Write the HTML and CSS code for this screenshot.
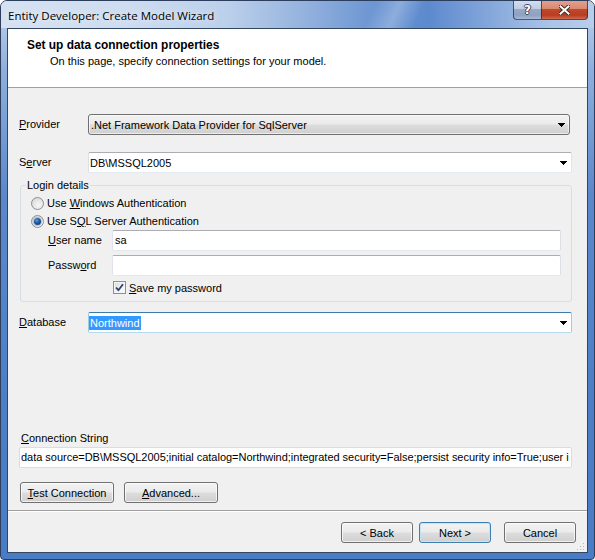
FILE: index.html
```html
<!DOCTYPE html>
<html>
<head>
<meta charset="utf-8">
<title>Entity Developer: Create Model Wizard</title>
<link rel="stylesheet" href="styles.css">
</head>
<body>
<div class="window">
  <div class="titlebar">
    <span class="title">Entity Developer: Create Model Wizard</span>
    <div class="caption-btns">
      <div class="cap cap-help"><span class="help-glyph">?</span></div>
      <div class="cap cap-close">
        <svg width="11" height="10" viewBox="0 0 11 10">
          <path d="M1.5 1.5L9.5 8.5M9.5 1.5L1.5 8.5" stroke="#3a2a2a" stroke-width="4" stroke-linecap="square" fill="none"/>
          <path d="M1.5 1.5L9.5 8.5M9.5 1.5L1.5 8.5" stroke="#ffffff" stroke-width="2" stroke-linecap="square" fill="none"/>
        </svg>
      </div>
    </div>
  </div>
  <div class="client">
    <div class="header">
      <div class="h-title">Set up data connection properties</div>
      <div class="h-sub">On this page, specify connection settings for your model.</div>
    </div>
    <div class="form">
      <div class="row">
        <span class="lbl"><u>P</u>rovider</span>
        <div class="combo combo-btn">
          <span class="combo-text">.Net Framework Data Provider for SqlServer</span>
          <svg class="arrow" width="7" height="4" viewBox="0 0 7 4"><path d="M0 0h7v1h-1v1h-1v1h-1v1h-1v-1h-1v-1h-1v-1h-1z" fill="#000"/></svg>
        </div>
      </div>
      <div class="row row-server">
        <span class="lbl">S<u>e</u>rver</span>
        <div class="combo combo-edit">
          <span class="combo-text edit-text">DB\MSSQL2005</span>
          <svg class="arrow" width="7" height="4" viewBox="0 0 7 4"><path d="M0 0h7v1h-1v1h-1v1h-1v1h-1v-1h-1v-1h-1v-1h-1z" fill="#000"/></svg>
        </div>
      </div>
      <fieldset class="group">
        <legend>Login details</legend>
        <div class="group-body">
          <div class="opt-row"><span class="radio"></span><span>Use <u>W</u>indows Authentication</span></div>
          <div class="opt-row"><span class="radio checked"><span class="dot"></span></span><span>Use S<u>Q</u>L Server Authentication</span></div>
          <div class="field-row">
            <span class="lbl"><u>U</u>ser name</span>
            <div class="textbox">sa</div>
          </div>
          <div class="field-row field-pass">
            <span class="lbl">Passw<u>o</u>rd</span>
            <div class="textbox"></div>
          </div>
          <div class="check-row">
            <span class="checkbox">
              <svg width="9" height="9" viewBox="0 0 9 9"><path d="M1 4.5L3.4 7.2L8 1.2" stroke="#2a3f6e" stroke-width="1.8" fill="none"/></svg>
            </span>
            <span><u>S</u>ave my password</span>
          </div>
        </div>
      </fieldset>
      <div class="row row-db">
        <span class="lbl"><u>D</u>atabase</span>
        <div class="combo combo-edit combo-focus">
          <span class="combo-text sel-text">Northwind</span>
          <svg class="arrow" width="7" height="4" viewBox="0 0 7 4"><path d="M0 0h7v1h-1v1h-1v1h-1v1h-1v-1h-1v-1h-1v-1h-1z" fill="#000"/></svg>
        </div>
      </div>
      <div class="conn">
        <span class="conn-lbl"><u>C</u>onnection String</span>
        <div class="conn-box">data source=DB\MSSQL2005;initial catalog=Northwind;integrated security=False;persist security info=True;user i</div>
      </div>
      <div class="conn-actions">
        <button class="btn btn-wide"><u>T</u>est Connection</button>
        <button class="btn btn-wide"><u>A</u>dvanced...</button>
      </div>
    </div>
    <div class="footer">
      <button class="btn btn-nav">&lt; Back</button>
      <button class="btn btn-nav btn-default">Next &gt;</button>
      <button class="btn btn-nav btn-cancel">Cancel</button>
    </div>
    <svg class="grip" width="8" height="8" viewBox="0 0 8 8">
      <rect x="6" y="0" width="1" height="1" fill="#b8b8b8"/>
      <rect x="3" y="3" width="1" height="1" fill="#b8b8b8"/>
      <rect x="6" y="3" width="1" height="1" fill="#b8b8b8"/>
      <rect x="0" y="6" width="1" height="1" fill="#b8b8b8"/>
      <rect x="3" y="6" width="1" height="1" fill="#b8b8b8"/>
      <rect x="6" y="6" width="1" height="1" fill="#b8b8b8"/>
    </svg>
  </div>
</div>
</body>
</html>
```

FILE: styles.css
```css
* { box-sizing: border-box; }
html, body { margin: 0; padding: 0; background: #ffffff; }
body {
  width: 595px;
  height: 560px;
  overflow: hidden;
  font-family: "Liberation Sans", Arial, sans-serif;
  font-size: 11px;
  color: #000;
}
u { text-decoration: underline; text-underline-offset: 1px; }

.window {
  width: 595px;
  height: 560px;
  border: 1px solid #2c3e5c;
  border-radius: 7px 7px 4px 4px;
  overflow: hidden;
  display: flex;
  flex-direction: column;
  background: linear-gradient(to bottom, #c3d4ea 0%, #8fb0de 12%, #5a88ca 35%, #4e7fc5 70%, #4a7cc4 100%);
}

.titlebar {
  height: 27px;
  flex: none;
  display: flex;
  align-items: flex-start;
  margin: 0 -1px;
  background:
    linear-gradient(115deg, rgba(255,255,255,0) 62%, rgba(255,255,255,0.25) 66%, rgba(255,255,255,0) 70%),
    linear-gradient(to right, #d6e2f2 0%, #cddcf0 22%, #bcd0eb 38%, #98b5df 50%, #6e97d3 62%, #5d8ace 72%, #7fa3d9 81%, #a9c3e6 92%, #b8cfeb 100%);
}
.title {
  padding: 7px 0 0 8px;
  font-family: "Open Sans", "Noto Sans", sans-serif;
  font-size: 11.5px;
  line-height: 16px;
  color: #000;
  text-shadow: 0 0 6px rgba(255,255,255,0.9);
}
.caption-btns {
  margin-left: auto;
  margin-right: 7px;
  margin-top: -1px;
  display: flex;
}
.cap {
  height: 20px;
  display: flex;
  align-items: center;
  justify-content: center;
  border: 1px solid rgba(28,44,72,0.75);
  border-top: none;
}
.cap-help {
  width: 28px;
  border-radius: 0 0 0 4px;
  border-right: none;
  background: linear-gradient(to bottom, #d6e0ee 0%, #c0cde2 45%, #98a9c6 50%, #8ea1c1 80%, #a9bad5 100%);
}
.help-glyph {
  font-family: "DejaVu Sans", sans-serif;
  font-weight: bold;
  font-size: 12px;
  color: #fff;
  line-height: 12px;
  text-shadow: 1px 0 0 #3b4a66, -1px 0 0 #3b4a66, 0 1px 0 #3b4a66, 0 -1px 0 #3b4a66;
}
.cap-close {
  width: 47px;
  border-radius: 0 0 4px 0;
  background: linear-gradient(to bottom, #e4a28f 0%, #d88a73 45%, #c0482b 50%, #b83d21 80%, #cf6a50 100%);
}

.client {
  flex: 1;
  margin: 0 6px 6px 6px;
  border: 1px solid #33465f;
  background: #f0f0f0;
  display: flex;
  flex-direction: column;
  position: relative;
}

.header {
  height: 59px;
  flex: none;
  background: #fff;
  border-bottom: 1px solid #a0a0a0;
  padding: 9px 0 0 19px;
}
.h-title {
  font-weight: bold;
  font-size: 11.9px;
  line-height: 14px;
}
.h-sub {
  margin-top: 2px;
  padding-left: 23px;
  font-size: 11px;
  line-height: 14px;
}

.form {
  flex: 1;
  display: flex;
  flex-direction: column;
  padding: 26px 15px 7px 11px;
}
.row {
  display: grid;
  grid-template-columns: 69px 1fr;
  align-items: center;
  height: 21px;
}
.row-server { margin-top: 17px; }
.row-db { margin-top: 10px; }
.lbl { line-height: 13px; white-space: nowrap; }

.combo {
  height: 21px;
  display: flex;
  align-items: center;
  padding: 0 4px 0 0;
}
.combo-text { flex: 1; white-space: nowrap; overflow: hidden; }
.arrow { flex: none; display: block; }
.combo-btn {
  margin-right: 2px;
  border: 1px solid #707070;
  border-radius: 3px;
  padding-left: 2px;
  background: linear-gradient(to bottom, #f2f2f2 0%, #ebebeb 48%, #dddddd 52%, #cfcfcf 100%);
  box-shadow: inset 0 0 0 1px rgba(255,255,255,0.6);
}
.combo-edit {
  background: #fff;
  border: 1px solid;
  border-color: #abadb3 #e2e3ea #e3e9ef #dbdfe6;
  border-radius: 2px;
  padding-left: 1px;
}
.combo-focus {
  border-color: #3d7bad #a4c9e3 #b7d9ed #a4c9e3;
  padding-left: 0;
}
.sel-text { flex: none; margin-right: auto; background: #3399ff; color: #fff; line-height: 14px; padding: 0 1px 0 1px; }

.group {
  margin: 6px 0 0 1px;
  padding: 0;
  border: 1px solid #d5dfe5;
  border-radius: 3px;
  min-width: 0;
}
.group legend {
  margin-left: 5px;
  padding: 0 1px;
  line-height: 13px;
}
.group-body {
  padding: 2px 10px 5px 10px;
}
.opt-row {
  height: 18px;
  display: flex;
  align-items: center;
}
.radio {
  width: 13px;
  height: 13px;
  flex: none;
  margin-right: 3px;
  border-radius: 50%;
  border: 1px solid #8e8f8f;
  background: radial-gradient(circle at 60% 65%, #f6f6f6 0%, #e4e4e4 55%, #c9c9c9 100%);
  display: flex;
  align-items: center;
  justify-content: center;
}
.radio .dot {
  width: 7px;
  height: 7px;
  border-radius: 50%;
  background: radial-gradient(circle at 40% 35%, #5d9be0 0%, #1d559e 45%, #0c2b5c 100%);
  box-shadow: 0 0 0 1px rgba(80,120,170,0.35);
}
.field-row {
  display: grid;
  grid-template-columns: 64px 1fr;
  align-items: center;
  height: 21px;
  margin-left: 17px;
}
.field-pass { margin-top: 4px; }
.textbox {
  height: 21px;
  background: #fff;
  border: 1px solid;
  border-color: #abadb3 #dbdfe6 #e3e9ef #e2e3ea;
  border-radius: 2px;
  padding: 3px 2px 0 2px;
  line-height: 13px;
}
.check-row {
  margin: 3px 0 0 82px;
  height: 17px;
  display: flex;
  align-items: center;
}
.checkbox {
  width: 13px;
  height: 13px;
  flex: none;
  margin-right: 3px;
  border: 1px solid #8e8f8f;
  background: linear-gradient(135deg, #dcdcdc 0%, #f2f2f2 60%, #ffffff 100%);
  box-shadow: inset 0 0 0 1px #f4f4f4;
  display: flex;
  align-items: center;
  justify-content: center;
}
.checkbox svg { display: block; }

.conn {
  margin-top: auto;
  display: flex;
  flex-direction: column;
}
.conn-lbl {
  margin-left: 2px;
  line-height: 14px;
}
.conn-box {
  margin-top: 2px;
  height: 21px;
  background: #fff;
  border: 1px solid #d9dde2;
  border-radius: 2px;
  padding: 3px 1px 0 1px;
  line-height: 13px;
  white-space: nowrap;
  overflow: hidden;
  letter-spacing: -0.02px;
}
.conn-actions {
  margin: 14px 0 0 1px;
  display: flex;
  gap: 10px;
}

.btn {
  height: 21px;
  padding: 0;
  font-family: "Liberation Sans", Arial, sans-serif;
  font-size: 11px;
  color: #000;
  border: 1px solid #707070;
  border-radius: 3px;
  background: linear-gradient(to bottom, #f2f2f2 0%, #ebebeb 48%, #dddddd 52%, #cfcfcf 100%);
  box-shadow: inset 0 0 0 1px rgba(255,255,255,0.7);
}
.btn-wide { width: 94px; }

.footer {
  flex: none;
  height: 42px;
  border-top: 1px solid #a0a0a0;
  box-shadow: inset 0 1px 0 #ffffff;
  display: flex;
  align-items: flex-start;
  padding: 11px 11px 0 0;
  justify-content: flex-end;
}
.btn-nav { width: 72px; }
.btn-default {
  margin-left: 6px;
  border-color: #3c7fb1;
  box-shadow: inset 0 0 0 1px #c4e5f6;
}
.btn-cancel { margin-left: 13px; }

.grip {
  position: absolute;
  right: 2px;
  bottom: 1px;
}
```
